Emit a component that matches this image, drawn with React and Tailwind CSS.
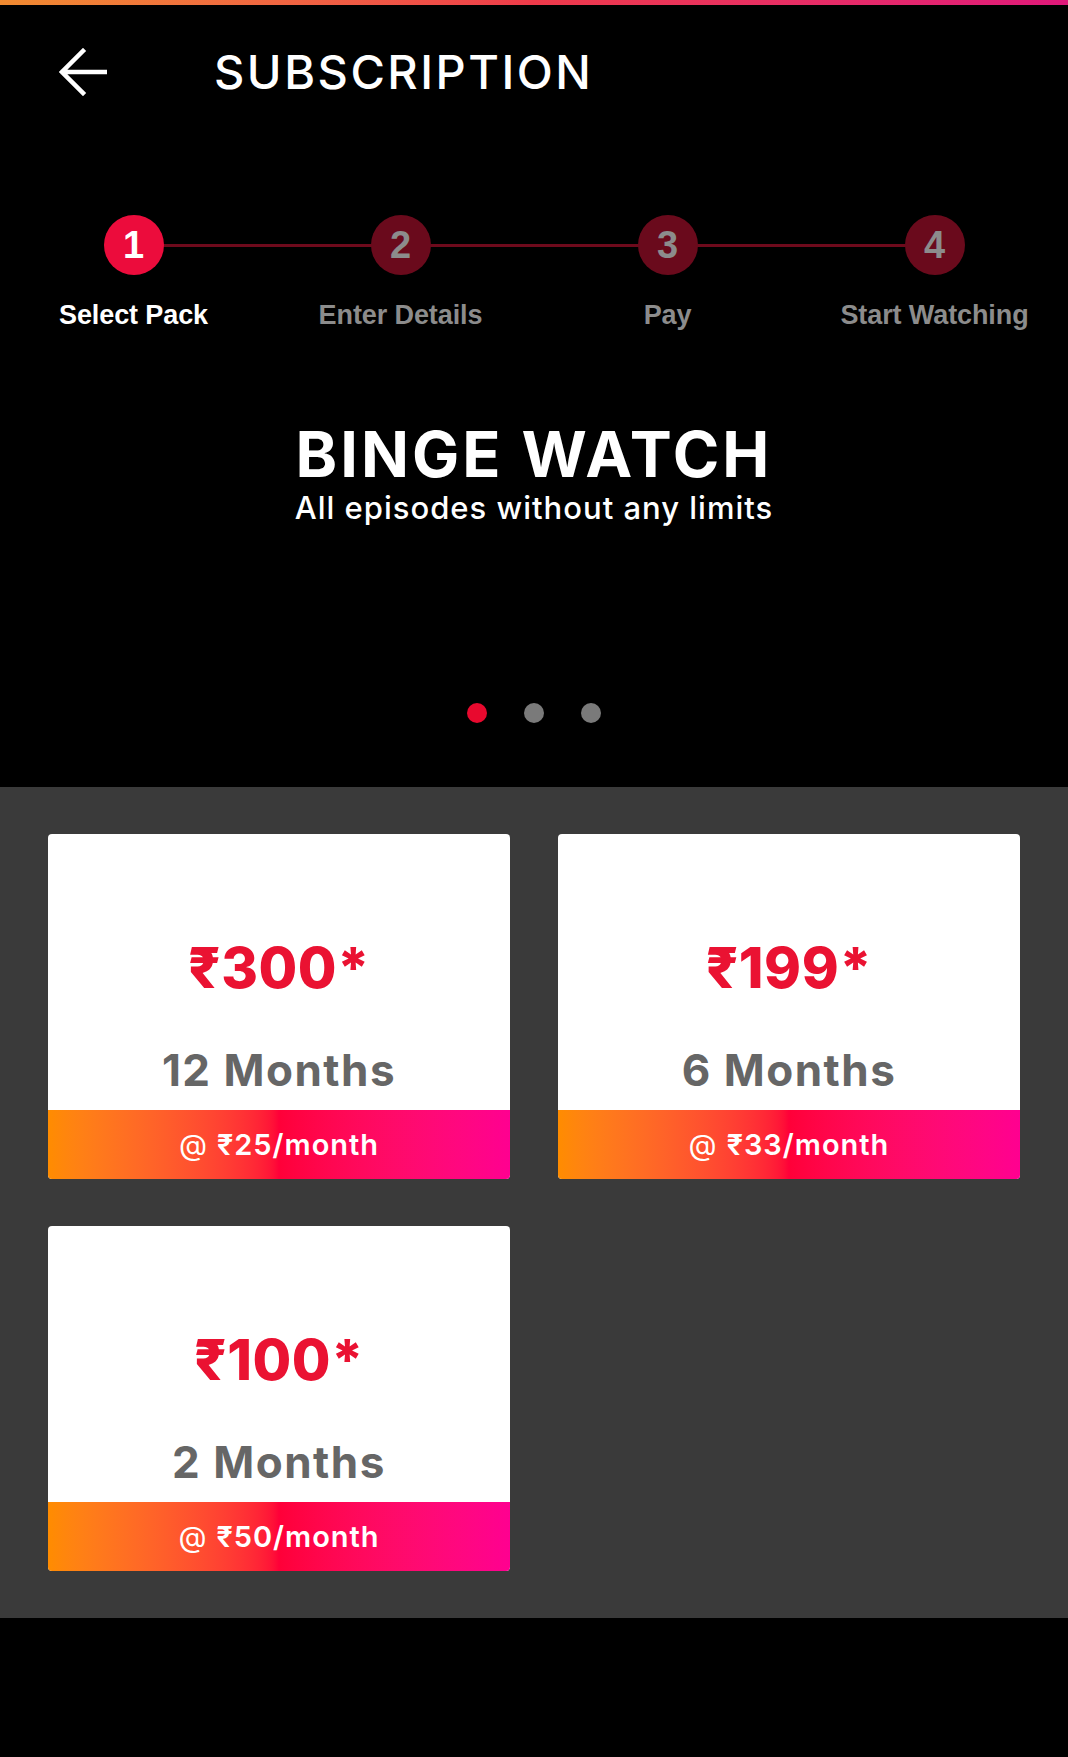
import React from "react";

const steps = ["Select Pack", "Enter Details", "Pay", "Start Watching"];

const packs = [
  { price: "300", months: "12 Months", perMonth: "25" },
  { price: "199", months: "6 Months", perMonth: "33" },
  { price: "100", months: "2 Months", perMonth: "50" },
];

function BackArrow() {
  return (
    <svg width="48" height="48" viewBox="0 0 48 48" fill="none">
      <path
        d="M46 24H4M24 3L3 24l21 21"
        stroke="white"
        strokeWidth="4.5"
        strokeLinecap="square"
      />
    </svg>
  );
}

function Stepper() {
  return (
    <div className="relative mt-[76px] grid grid-cols-4">
      <div className="absolute left-[133px] right-[133px] top-[29px] h-[3px] bg-[#6e0a1c]" />
      {steps.map((label, i) => (
        <div key={label} className="relative flex flex-col items-center">
          <div
            className={
              i === 0
                ? "flex h-[60px] w-[60px] items-center justify-center rounded-full bg-[#ec0c3c] text-[38px] font-bold text-white"
                : "flex h-[60px] w-[60px] items-center justify-center rounded-full bg-[#6a0a1c] text-[38px] font-bold text-[#8c8c8c]"
            }
          >
            {i + 1}
          </div>
          <p
            className={
              i === 0
                ? "mt-[24px] text-[27px] leading-8 font-bold tracking-[-0.1px] text-white"
                : "mt-[24px] text-[27px] leading-8 font-bold tracking-[-0.1px] text-[#8c8c8c]"
            }
          >
            {label}
          </p>
        </div>
      ))}
    </div>
  );
}

function PackCard({ pack }) {
  return (
    <div className="flex h-[345px] flex-col overflow-hidden rounded-[4px] bg-white">
      <div className="flex flex-1 flex-col items-center">
        <p className="mt-[104px] text-[56px] leading-[60px] font-extrabold tracking-[0.5px] text-[#ea1232]">
          ₹{pack.price}*
        </p>
        <p className="mt-[49px] text-[44px] leading-[46px] font-bold tracking-[1.5px] text-[#666666]">
          {pack.months}
        </p>
      </div>
      <div className="flex h-[69px] items-center justify-center bg-gradient-to-r from-[#ff8c00] via-[#ff0038] to-[#ff0090] text-[29px] font-semibold tracking-[1px] text-white">
        <span className="font-normal">@</span>
        <span className="ml-[9px]">₹{pack.perMonth}/month</span>
      </div>
    </div>
  );
}

export default function App() {
  return (
    <div className="flex min-h-[1757px] w-full flex-col bg-black font-['Inter','Noto_Sans',sans-serif]">
      <div className="h-[5px] bg-gradient-to-r from-[#f08a30] via-[#ee3a4a] to-[#e0187a]" />

      <header className="flex h-[134px] items-center pl-[59px]">
        <BackArrow />
        <h1 className="ml-[107px] text-[47px] font-medium tracking-[2.5px] text-white">
          SUBSCRIPTION
        </h1>
      </header>

      <div className="font-['Liberation_Sans',Arial,sans-serif]">
        <Stepper />
      </div>

      <section className="flex flex-col items-center pb-[64px]">
        <h2 className="mt-[92px] text-[63px] leading-[63px] font-bold tracking-[3px] text-white">
          BINGE WATCH
        </h2>
        <p className="mt-[4px] text-[31px] leading-[35px] font-medium tracking-[1px] text-white">
          All episodes without any limits
        </p>
        <div className="mt-[178px] flex gap-[37px]">
          <span className="h-5 w-5 rounded-full bg-[#e8092e]" />
          <span className="h-5 w-5 rounded-full bg-[#7a7a7a]" />
          <span className="h-5 w-5 rounded-full bg-[#7a7a7a]" />
        </div>
      </section>

      <section className="grid grid-cols-2 gap-x-[48px] gap-y-[47px] bg-[#3a3a3a] px-[48px] py-[47px]">
        {packs.map((p) => (
          <PackCard key={p.price} pack={p} />
        ))}
      </section>

      <div className="flex-1 bg-black" />
    </div>
  );
}
